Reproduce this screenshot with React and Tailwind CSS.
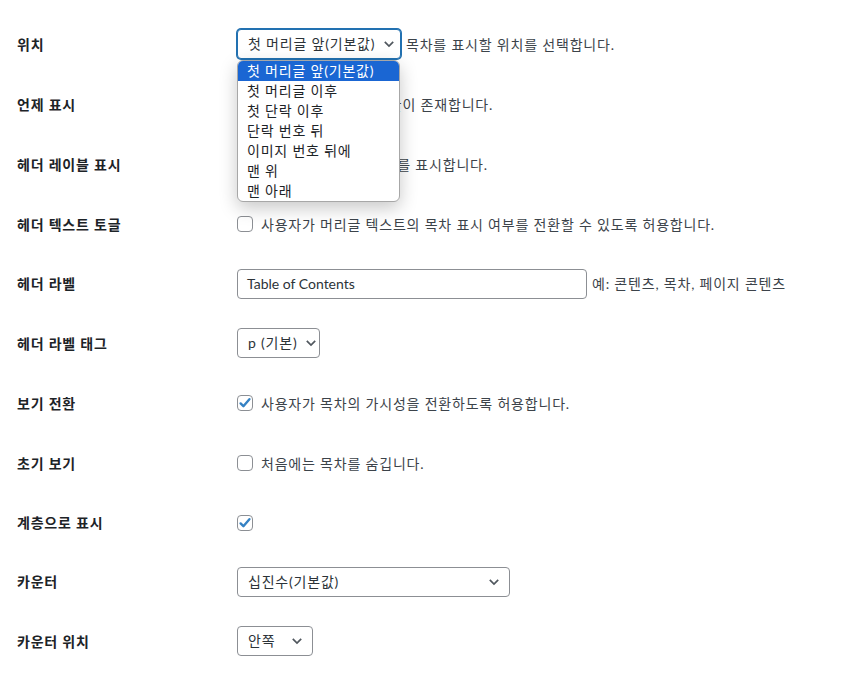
const FONT = { fontFamily: 'Lato, "Noto Sans CJK KR", sans-serif' }

function Chevron() {
  return (
    <svg width="12" height="8" viewBox="0 0 12 8" className="shrink-0">
      <path d="M1.8 1.8l4.2 4.2 4.2-4.2" fill="none" stroke="#50575e" strokeWidth="1.7" />
    </svg>
  )
}

function Select({ value, width, focused = false, gap = false }) {
  return (
    <div
      className={[
        'h-[30px] rounded-[4px] bg-white flex items-center pl-[10px] pr-[9px] text-[14px] text-[#2c3338]',
        focused
          ? 'border border-[#2271b1] shadow-[0_0_0_1px_#2271b1]'
          : 'border border-[#8c8f94]',
        gap ? 'gap-2' : 'justify-between',
      ].join(' ')}
      style={{ width }}
    >
      <span className="leading-none whitespace-nowrap">{value}</span>
      <Chevron />
    </div>
  )
}

function Checkbox({ checked = false }) {
  return (
    <span className="w-4 h-4 rounded-[4px] border border-[#8c8f94] bg-white flex items-center justify-center shrink-0">
      {checked && (
        <svg width="14" height="14" viewBox="0 0 14 14">
          <path d="M2.6 7.4l2.8 2.8 6-7" fill="none" stroke="#3582c4" strokeWidth="2.4" strokeLinecap="round" strokeLinejoin="round" />
        </svg>
      )}
    </span>
  )
}

function Row({ label, h = 'h-[60px]', children }) {
  return (
    <div className={`flex ${h} items-center`}>
      <div className="w-[220px] shrink-0 text-[14px] font-semibold text-[#1d2327]">{label}</div>
      <div className="flex items-center gap-[5px] text-[14px] text-[#3c434a]">{children}</div>
    </div>
  )
}

const OPTIONS = [
  '첫 머리글 앞(기본값)',
  '첫 머리글 이후',
  '첫 단락 이후',
  '단락 번호 뒤',
  '이미지 번호 뒤에',
  '맨 위',
  '맨 아래',
]

export default function App() {
  return (
    <div className="relative w-[844px] h-[681px] bg-white overflow-hidden tracking-[0.8px]" style={FONT}>
      <div className="pl-[17px] pt-[14px]">
        <Row label="위치">
          <Select value="첫 머리글 앞(기본값)" width={164} focused gap />
          <span>목차를 표시할 위치를 선택합니다.</span>
        </Row>
        <Row label="언제 표시">
          <Select value="4" width={56} />
          <span>개 이상의 머리글이 존재합니다.</span>
        </Row>
        <Row label="헤더 레이블 표시">
          <Checkbox checked />
          <span className="ml-[3px]">목차 위에 헤더 텍스트를 표시합니다.</span>
        </Row>
        <Row label="헤더 텍스트 토글">
          <Checkbox />
          <span className="ml-[3px]">사용자가 머리글 텍스트의 목차 표시 여부를 전환할 수 있도록 허용합니다.</span>
        </Row>
        <Row label="헤더 라벨" h="h-[59px]">
          <div className="w-[350px] h-[30px] rounded-[4px] border border-[#8c8f94] bg-white flex items-center px-[9px] text-[14px] text-[#2c3338] tracking-normal">
            Table of Contents
          </div>
          <span>예: 콘텐츠, 목차, 페이지 콘텐츠</span>
        </Row>
        <Row label="헤더 라벨 태그" h="h-[60px]">
          <Select value="p (기본)" width={83} gap />
        </Row>
        <Row label="보기 전환">
          <Checkbox checked />
          <span className="ml-[3px]">사용자가 목차의 가시성을 전환하도록 허용합니다.</span>
        </Row>
        <Row label="초기 보기">
          <Checkbox />
          <span className="ml-[3px]">처음에는 목차를 숨깁니다.</span>
        </Row>
        <Row label="계층으로 표시" h="h-[59px]">
          <Checkbox checked />
        </Row>
        <Row label="카운터" h="h-[59px]">
          <Select value="십진수(기본값)" width={273} />
        </Row>
        <Row label="카운터 위치">
          <Select value="안쪽" width={76} />
        </Row>
      </div>

      <ul className="absolute left-[237px] top-[60px] w-[163px] bg-white border border-[#a7a7a7] rounded-[6px] overflow-hidden shadow-[0_6px_18px_rgba(0,0,0,0.22)] text-[14px] text-[#1d2327]">
        {OPTIONS.map((o, i) => (
          <li
            key={o}
            className={[
              'h-[20px] pl-[9px] flex items-center leading-none whitespace-nowrap',
              i === 0 ? 'bg-[#1a66d3] text-white' : '',
            ].join(' ')}
          >
            {o}
          </li>
        ))}
      </ul>
    </div>
  )
}
